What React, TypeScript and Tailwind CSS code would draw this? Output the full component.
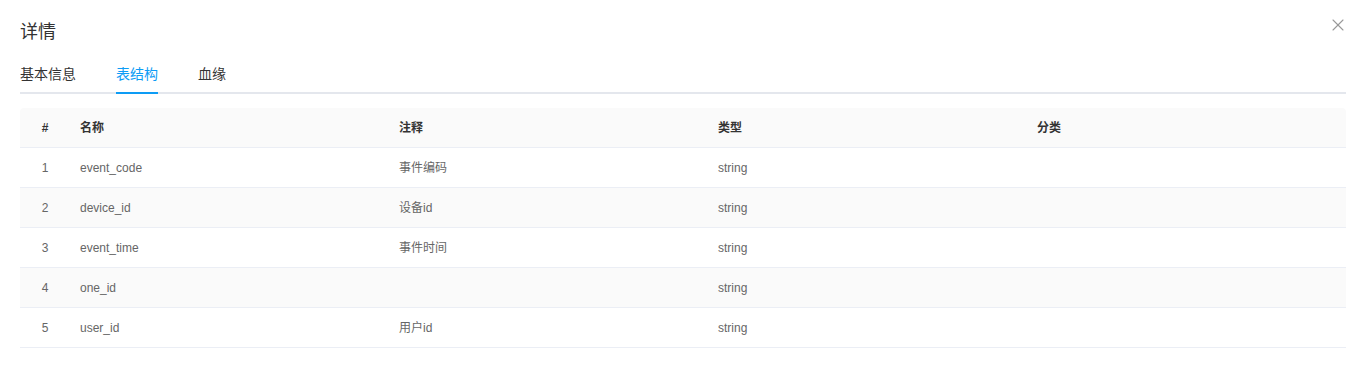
import { X } from 'lucide-react';

const rows = [
  { name: 'event_code', comment: '事件编码', type: 'string', category: '' },
  { name: 'device_id', comment: '设备id', type: 'string', category: '' },
  { name: 'event_time', comment: '事件时间', type: 'string', category: '' },
  { name: 'one_id', comment: '', type: 'string', category: '' },
  { name: 'user_id', comment: '用户id', type: 'string', category: '' },
];

const tabs = ['基本信息', '表结构', '血缘'];

export default function App() {
  return (
    <div
      className="relative min-h-[389px] bg-white px-5 pt-5"
      style={{ fontFamily: '"Liberation Sans", "Noto Sans CJK SC", sans-serif' }}
    >
      <button className="absolute right-[18px] top-[15px] text-[#999]">
        <X className="h-5 w-5" strokeWidth={1.3} />
      </button>

      <h2 className="h-6 text-[18px] leading-6 text-[#333]">详情</h2>

      <div className="mt-[10px] flex gap-10 border-b-2 border-[#e4e7ed]">
        {tabs.map((t, i) => (
          <div
            key={t}
            className={
              i === 1
                ? '-mb-[2px] h-10 border-b-2 border-[#0d9cf5] text-[14px] leading-[40px] text-[#0d9cf5]'
                : '-mb-[2px] h-10 border-b-2 border-transparent text-[14px] leading-[40px] text-[#333]'
            }
          >
            {t}
          </div>
        ))}
      </div>

      <div className="mt-[14px] text-[12px]">
        <div className="grid h-10 grid-cols-[50px_1fr_1fr_1fr_1fr] items-center rounded-t bg-[#fafafa] border-b border-[#ebeef5] font-bold text-[#333]">
          <div className="text-center">#</div>
          <div className="px-[10px]">名称</div>
          <div className="px-[10px]">注释</div>
          <div className="px-[10px]">类型</div>
          <div className="px-[10px]">分类</div>
        </div>
        {rows.map((r, i) => (
          <div
            key={r.name}
            className={
              i % 2 === 1
                ? 'grid h-10 grid-cols-[50px_1fr_1fr_1fr_1fr] items-center border-b border-[#ebeef5] bg-[#fafafa] text-[#666]'
                : 'grid h-10 grid-cols-[50px_1fr_1fr_1fr_1fr] items-center border-b border-[#ebeef5] text-[#666]'
            }
          >
            <div className="text-center">{i + 1}</div>
            <div className="px-[10px]">{r.name}</div>
            <div className="px-[10px]">{r.comment}</div>
            <div className="px-[10px]">{r.type}</div>
            <div className="px-[10px]">{r.category}</div>
          </div>
        ))}
      </div>
    </div>
  );
}
